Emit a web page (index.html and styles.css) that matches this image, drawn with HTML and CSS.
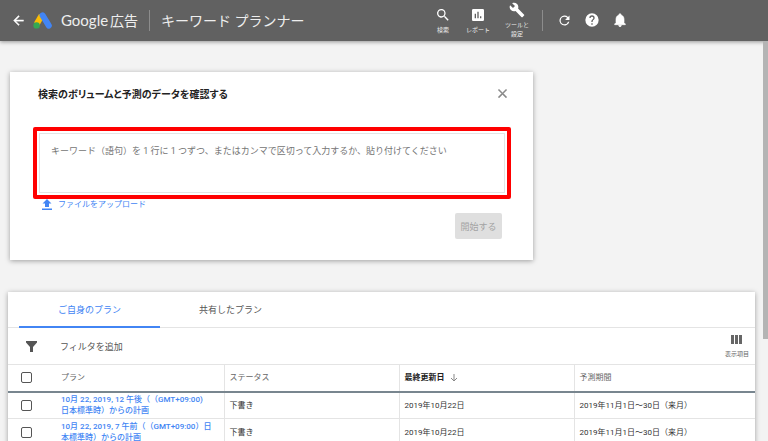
FILE: index.html
```html
<!DOCTYPE html>
<html lang="ja">
<head>
  <meta charset="UTF-8">
  <meta name="viewport" content="width=device-width, initial-scale=1">
  <title>キーワード プランナー</title>
  <link rel="stylesheet" href="styles.css">
</head>
<body>
  <header class="header">
    <button class="icon-btn back" type="button" aria-label="戻る">
      <svg width="15" height="15" viewBox="0 0 24 24"><path d="M20 11H7.800l5.600-5.600L12 4l-8 8 8 8 1.400-1.400L7.800 13H20z" stroke="currentColor" stroke-width=".6"/></svg>
    </button>
    <a class="brand" href="#">
      <svg class="logo" width="20" height="17" viewBox="0 0 20 17">
        <path d="M8.600 3.400 3.700 12" stroke="#fbbc04" stroke-width="6"/>
        <path d="M9.600 3.400 15.800 13.600" stroke="#4285f4" stroke-width="6" stroke-linecap="round"/>
        <circle cx="3.600" cy="13.400" r="3.200" fill="#34a853"/>
      </svg>
      <span class="brand-name">Google</span>
      <span class="brand-sub">広告</span>
    </a>
    <span class="divider"></span>
    <h1 class="page-title">キーワード プランナー</h1>

    <nav class="tools">
      <button class="tool" type="button">
        <svg width="16" height="16" viewBox="0 0 24 24"><path d="M15.5 14h-.8l-.3-.3A6.5 6.5 0 1 0 13.700 14.400l.3.3v.8l5 5 1.500-1.500zm-6 0a4.500 4.500 0 1 1 0-9 4.500 4.500 0 0 1 0 9z"/></svg>
        <span>検索</span>
      </button>
      <button class="tool" type="button">
        <svg width="16" height="16" viewBox="0 0 24 24"><path d="M19 3H5a2 2 0 0 0-2 2v14c0 1.100.9 2 2 2h14a2 2 0 0 0 2-2V5a2 2 0 0 0-2-2zM9 17H7v-7h2zm4 0h-2V7h2zm4 0h-2v-3h2z"/></svg>
        <span>レポート</span>
      </button>
      <button class="tool" type="button">
        <svg width="16" height="16" viewBox="0 0 24 24"><path d="M22.700 19l-9.100-9.100c.9-2.300.4-5-1.500-6.900-2-2-5-2.400-7.400-1.300L9 6 6 9 1.600 4.700C.4 7.100.9 10.100 2.900 12.100c1.900 1.900 4.600 2.400 6.900 1.500l9.100 9.100c.4.4 1 .4 1.400 0l2.300-2.300c.5-.4.5-1.100.1-1.400z"/></svg>
        <span>ツールと<br>設定</span>
      </button>
      <span class="divider"></span>
      <button class="icon-btn" type="button" aria-label="更新">
        <svg width="15" height="15" viewBox="0 0 24 24"><path d="M17.650 6.350A8 8 0 1 0 19.730 14h-2.080A6 6 0 1 1 12 6c1.660 0 3.140.690 4.220 1.780L13 11h7V4z"/></svg>
      </button>
      <button class="icon-btn" type="button" aria-label="ヘルプ">
        <svg width="16" height="16" viewBox="0 0 24 24"><path d="M12 2a10 10 0 1 0 0 20 10 10 0 0 0 0-20zm1 17h-2v-2h2zm2.070-7.750-.9.920C13.450 12.900 13 13.500 13 15h-2v-.5c0-1.100.450-2.100 1.170-2.830l1.240-1.260c.370-.360.590-.860.590-1.410a2 2 0 1 0-4 0H8a4 4 0 1 1 8 0c0 .880-.360 1.680-.930 2.250z"/></svg>
      </button>
      <button class="icon-btn" type="button" aria-label="通知">
        <svg width="16" height="16" viewBox="0 0 24 24"><path d="M12 22a2 2 0 0 0 2-2h-4a2 2 0 0 0 2 2zm6-6v-5c0-3.070-1.640-5.640-4.500-6.320V4a1.500 1.500 0 0 0-3 0v.680C7.630 5.360 6 7.920 6 11v5l-2 2v1h16v-1z" stroke="currentColor"/></svg>
      </button>
    </nav>
  </header>

  <main class="content">
    <section class="card search-card">
      <div class="card-head">
        <h2>検索のボリュームと予測のデータを確認する</h2>
        <button class="icon-btn close" type="button" aria-label="閉じる">
          <svg width="15" height="15" viewBox="0 0 24 24"><path d="M19 6.400 17.600 5 12 10.600 6.400 5 5 6.400 10.600 12 5 17.600 6.400 19 12 13.400 17.600 19 19 17.600 13.400 12z" stroke="currentColor" stroke-width=".6"/></svg>
        </button>
      </div>
      <div class="highlight">
        <textarea class="keywords" aria-label="キーワード" placeholder="キーワード（語句）を 1 行に 1 つずつ、またはカンマで区切って入力するか、貼り付けてください"></textarea>
      </div>
      <a class="upload" href="#">
        <svg width="10" height="12" viewBox="0 0 10 12"><path d="M5 0 .5 4.500H3V8h4V4.500h2.500zM0 9.500h10V11H0z"/></svg>
        <span>ファイルをアップロード</span>
      </a>
      <button class="start" type="button" disabled>開始する</button>
    </section>

    <section class="card plans">
      <div class="tabs">
        <button class="tab active" type="button">ご自身のプラン</button>
        <button class="tab" type="button">共有したプラン</button>
      </div>
      <div class="filter-bar">
        <svg class="funnel" width="11" height="11" viewBox="0 0 11 11"><path d="M0 0h11v1.500L7 6v5H4V6L0 1.500z"/></svg>
        <button class="add-filter" type="button">フィルタを追加</button>
        <button class="columns" type="button">
          <svg width="11" height="9" viewBox="0 0 11 9"><path d="M0 0h3v9H0zM4 0h3v9H4zM8 0h3v9H8z"/></svg>
          <span>表示項目</span>
        </button>
      </div>
      <table class="plan-table">
        <thead>
          <tr>
            <th class="check"><input type="checkbox" aria-label="すべて選択"></th>
            <th class="name">プラン</th>
            <th class="col">ステータス</th>
            <th class="col sorted">最終更新日
              <svg width="8" height="8" viewBox="0 0 8 8"><path d="M4 0v7M1 4l3 3 3-3"/></svg>
            </th>
            <th>予測期間</th>
          </tr>
        </thead>
        <tbody>
          <tr>
            <td class="check"><input type="checkbox" aria-label="プランを選択"></td>
            <td class="name"><a href="#">10月 22, 2019, 12 午後（（GMT+09:00)<br>日本標準時）からの計画</a></td>
            <td>下書き</td>
            <td>2019年10月22日</td>
            <td>2019年11月1日～30日（来月）</td>
          </tr>
          <tr>
            <td class="check"><input type="checkbox" aria-label="プランを選択"></td>
            <td class="name"><a href="#">10月 22, 2019, 7 午前（（GMT+09:00）日<br>本標準時）からの計画</a></td>
            <td>下書き</td>
            <td>2019年10月22日</td>
            <td>2019年11月1日～30日（来月）</td>
          </tr>
        </tbody>
      </table>
    </section>
  </main>
  <div class="scroll-thumb"></div>
</body>
</html>
```
FILE: styles.css
```css
* { box-sizing: border-box; }
body {
  margin: 0;
  height: 100vh;
  overflow: hidden;
  background: #f3f3f3;
  color: #555;
  font-family: Roboto, "Noto Sans CJK JP", sans-serif;
  font-size: 9px;
}
button {
  font: inherit;
  color: inherit;
  background: none;
  border: none;
  padding: 0;
  cursor: pointer;
}
svg { display: block; fill: currentColor; }
a { color: #4285f4; text-decoration: none; }
h1, h2 { margin: 0; }

/* header */
.header {
  position: relative;
  display: flex;
  align-items: center;
  height: 41px;
  padding: 0 140px 1px 11px;
  background: #616161;
  color: #fff;
  box-shadow: 0 1px 4px rgba(0, 0, 0, 0.4);
}
.brand {
  display: flex;
  align-items: center;
  margin-left: 7px;
  color: #eee;
}
.logo { fill: none; }
.brand-name {
  margin-left: 8px;
  font-family: Lato, sans-serif;
  font-size: 15px;
}
.brand-sub { margin-left: 2px; font-size: 14px; }
.divider { width: 1px; height: 21px; background: #8c8c8c; }
.header > .divider { margin: 0 11px; }
.page-title { font-size: 14px; font-weight: 400; color: #eee; white-space: nowrap; }
.tools {
  display: flex;
  align-items: center;
  height: 100%;
  margin-left: auto;
}
.tools .divider { margin: 0 14px 0 13px; }
.tools .icon-btn + .icon-btn { margin-left: 12px; }
.tool {
  display: flex;
  flex-direction: column;
  align-items: center;
  font-size: 6px;
  line-height: 9px;
  color: #eee;
}
.tool svg { color: #fff; }
.tool span { margin-top: 2px; }
.tool + .tool { margin-left: 15px; }

/* search card */
.content { padding: 31px 13px 0 8px; }
.card { background: #fff; box-shadow: 0 1px 5px rgba(0, 0, 0, 0.35); }
.search-card {
  display: flex;
  flex-direction: column;
  width: 70%;
  margin-left: 2px;
  padding: 11px 22px 21px 23px;
}
.card-head {
  display: flex;
  justify-content: space-between;
  align-items: center;
  height: 20px;
  padding: 0 1px 0 5px;
}
.card-head h2 { font-size: 10px; color: #222; font-feature-settings: "palt"; }
.close { color: #888; }
.highlight {
  margin-top: 24px;
  padding: 2px;
  border: 4px solid #f00;
  border-radius: 2px;
}
.keywords {
  display: block;
  width: 100%;
  height: 60px;
  padding: 10px 11px;
  border: 1px solid #e4e4e4;
  outline: none;
  resize: none;
  font: inherit;
  line-height: 14px;
}
.keywords::placeholder { color: #757575; }
.upload {
  display: flex;
  align-items: center;
  gap: 6px;
  height: 12px;
  margin-left: 9px;
  font-size: 8px;
  line-height: 12px;
}
.start {
  align-self: flex-end;
  width: 47px;
  height: 26px;
  margin: 2px 9px 0 0;
  border-radius: 2px;
  background: #dfdfdf;
  color: #a3a3a3;
}

/* plan list */
.plans { margin-top: 32px; }
.tabs {
  display: flex;
  height: 36px;
  padding-left: 11px;
  border-bottom: 1px solid #e4e4e4;
}
.tab { width: 141px; height: 36px; border-bottom: 2px solid transparent; }
.tab.active { color: #4285f4; border-color: #4285f4; }
.filter-bar {
  display: flex;
  align-items: center;
  height: 36px;
  padding: 0 6px 0 18px;
}
.add-filter { margin-left: 23px; }
.columns {
  display: flex;
  flex-direction: column;
  align-items: center;
  gap: 5px;
  margin-left: auto;
  font-size: 6px;
  line-height: 9px;
  color: #666;
}
.plan-table {
  width: 100%;
  table-layout: fixed;
  border-collapse: collapse;
  font-size: 8px;
  line-height: 11px;
  text-align: left;
  text-spacing-trim: space-all;
}
th, td {
  height: 27px;
  padding: 0 5px;
  border-top: 1px solid #e4e4e4;
  border-left: 1px solid #e4e4e4;
}
th { font-weight: 400; color: #666; border-bottom: 2px solid #78868f; }
td { color: #333; }
td a { font-weight: 500; }
.check { width: 48px; padding: 0 0 0 13px; border-left: none; }
.name { width: 168px; border-left: none; white-space: nowrap; }
.col { width: 175px; }
.sorted { font-weight: 700; color: #222; }
.sorted svg {
  display: inline-block;
  margin-left: 3px;
  vertical-align: middle;
  fill: none;
  stroke: #888;
}
.check input {
  appearance: none;
  display: block;
  width: 11px;
  height: 11px;
  margin: 0;
  border: 1px solid #555;
  border-radius: 2px;
}

.scroll-thumb {
  position: fixed;
  top: 41px;
  right: 0;
  width: 5px;
  height: 298px;
  background: #b4b4b4;
}
```
